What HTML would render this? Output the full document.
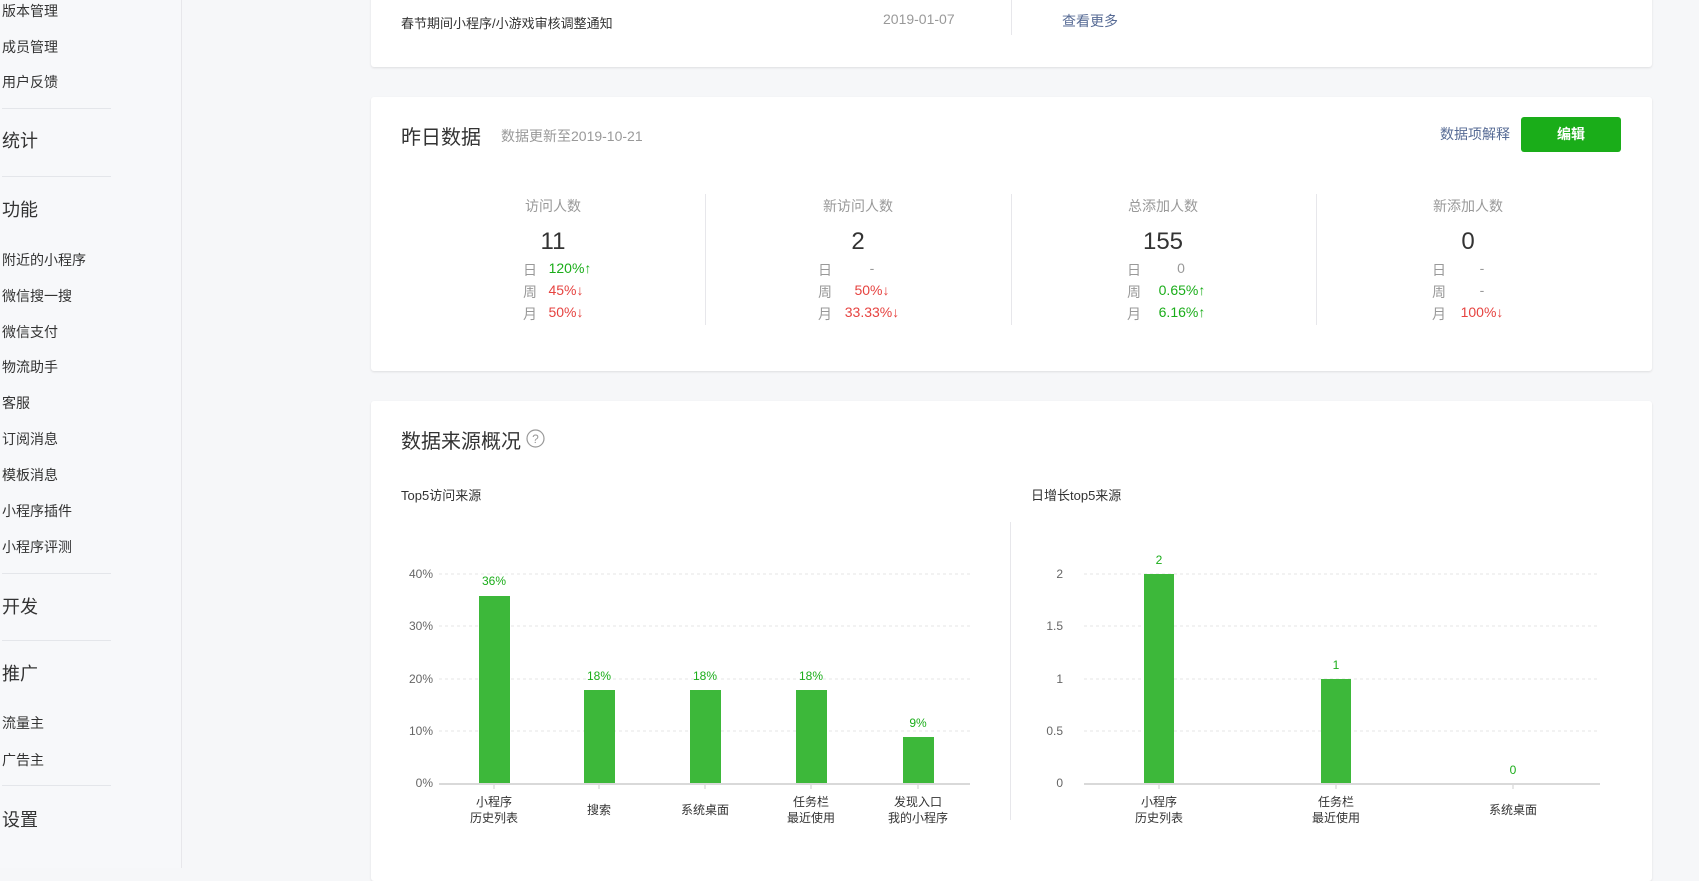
<!DOCTYPE html>
<html><head><meta charset="utf-8"><style>
*{margin:0;padding:0;box-sizing:border-box}
body{width:1699px;height:868px;overflow:hidden;background:#f6f7f9;font-family:"Liberation Sans","Noto Sans CJK SC",sans-serif;color:#333;position:relative}
.a{position:absolute;white-space:nowrap}
.side{position:absolute;left:0;top:0;width:182px;height:868px;background:#f7f8fa;border-right:1px solid #e7e7eb}
.si{position:absolute;left:2px;font-size:14px;color:#333;line-height:18px}
.sh{position:absolute;left:2px;font-size:18px;color:#333;line-height:22px}
.sl{position:absolute;left:2px;width:109px;height:1px;background:#e4e6ea}
.card{position:absolute;left:371px;width:1281px;background:#fff;border-radius:3px;box-shadow:0 1px 2px rgba(0,0,0,.1)}
.lab{font-size:14px;color:#999;transform:translateX(-50%)}
.num{font-size:24px;color:#333;font-weight:300;transform:translateX(-50%)}
.k{font-size:14px;color:#999}
.v{font-size:14px;transform:translateX(-50%)}
.g{color:#1aad19}.r{color:#e64340}.n{color:#999}
</style></head><body>
<div class="side">
<div class="si" style="top:2px">版本管理</div>
<div class="si" style="top:38px">成员管理</div>
<div class="si" style="top:73px">用户反馈</div>
<div class="sl" style="top:108px"></div>
<div class="sh" style="top:130px">统计</div>
<div class="sl" style="top:176px"></div>
<div class="sh" style="top:199px">功能</div>
<div class="si" style="top:251px">附近的小程序</div>
<div class="si" style="top:287px">微信搜一搜</div>
<div class="si" style="top:323px">微信支付</div>
<div class="si" style="top:358px">物流助手</div>
<div class="si" style="top:394px">客服</div>
<div class="si" style="top:430px">订阅消息</div>
<div class="si" style="top:466px">模板消息</div>
<div class="si" style="top:502px">小程序插件</div>
<div class="si" style="top:538px">小程序评测</div>
<div class="sl" style="top:573px"></div>
<div class="sh" style="top:596px">开发</div>
<div class="sl" style="top:640px"></div>
<div class="sh" style="top:663px">推广</div>
<div class="si" style="top:714px">流量主</div>
<div class="si" style="top:751px">广告主</div>
<div class="sl" style="top:785px"></div>
<div class="sh" style="top:809px">设置</div>
</div>

<div class="card" style="top:-10px;height:77px"></div>
<div class="a" style="left:401px;top:13px;font-size:13px">春节期间小程序/小游戏审核调整通知</div>
<div class="a" style="left:883px;top:11px;font-size:14px;color:#999">2019-01-07</div>
<div class="a" style="left:1011px;top:0;width:1px;height:35px;background:#e7e7eb"></div>
<div class="a" style="left:1062px;top:11px;font-size:14px;color:#576b95">查看更多</div>

<div class="card" style="top:97px;height:274px"></div>
<div class="a" style="left:401px;top:121px;font-size:20px;color:#333">昨日数据</div>
<div class="a" style="left:501px;top:126px;font-size:14px;color:#999">数据更新至2019-10-21</div>
<div class="a" style="left:1440px;top:124px;font-size:14px;color:#576b95">数据项解释</div>
<div class="a" style="left:1521px;top:117px;width:100px;height:35px;background:#1aad19;border-radius:3px;color:#fff;font-size:14px;font-weight:bold;text-align:center;line-height:35px">编辑</div>
<div class="a" style="left:705px;top:194px;width:1px;height:131px;background:#e7e7eb"></div>
<div class="a" style="left:1011px;top:194px;width:1px;height:131px;background:#e7e7eb"></div>
<div class="a" style="left:1316px;top:194px;width:1px;height:131px;background:#e7e7eb"></div>

<div class="a lab" style="left:553px;top:196px">访问人数</div>
<div class="a num" style="left:553px;top:228px">11</div>
<div class="a k" style="left:523px;top:260px">日</div><div class="a v g" style="left:570px;top:260px">120%↑</div>
<div class="a k" style="left:523px;top:282px">周</div><div class="a v r" style="left:566px;top:282px">45%↓</div>
<div class="a k" style="left:523px;top:304px">月</div><div class="a v r" style="left:566px;top:304px">50%↓</div>

<div class="a lab" style="left:858px;top:196px">新访问人数</div>
<div class="a num" style="left:858px;top:228px">2</div>
<div class="a k" style="left:818px;top:260px">日</div><div class="a v n" style="left:872px;top:260px">-</div>
<div class="a k" style="left:818px;top:282px">周</div><div class="a v r" style="left:872px;top:282px">50%↓</div>
<div class="a k" style="left:818px;top:304px">月</div><div class="a v r" style="left:872px;top:304px">33.33%↓</div>

<div class="a lab" style="left:1163px;top:196px">总添加人数</div>
<div class="a num" style="left:1163px;top:228px">155</div>
<div class="a k" style="left:1127px;top:260px">日</div><div class="a v n" style="left:1181px;top:260px">0</div>
<div class="a k" style="left:1127px;top:282px">周</div><div class="a v g" style="left:1182px;top:282px">0.65%↑</div>
<div class="a k" style="left:1127px;top:304px">月</div><div class="a v g" style="left:1182px;top:304px">6.16%↑</div>

<div class="a lab" style="left:1468px;top:196px">新添加人数</div>
<div class="a num" style="left:1468px;top:228px">0</div>
<div class="a k" style="left:1432px;top:260px">日</div><div class="a v n" style="left:1482px;top:260px">-</div>
<div class="a k" style="left:1432px;top:282px">周</div><div class="a v n" style="left:1482px;top:282px">-</div>
<div class="a k" style="left:1432px;top:304px">月</div><div class="a v r" style="left:1482px;top:304px">100%↓</div>

<div class="card" style="top:401px;height:480px"></div>
<div class="a" style="left:401px;top:425px;font-size:20px;color:#333">数据来源概况</div>
<svg class="a" style="left:525px;top:428px" width="21" height="21"><circle cx="10.5" cy="10.5" r="8.5" fill="none" stroke="#999" stroke-width="1.2"/><text x="10.5" y="15" text-anchor="middle" font-size="12" fill="#999" font-family="Liberation Sans">?</text></svg>
<div class="a" style="left:401px;top:485px;font-size:13px;color:#333">Top5访问来源</div>
<div class="a" style="left:1031px;top:485px;font-size:13px;color:#333">日增长top5来源</div>
<div class="a" style="left:1010px;top:522px;width:1px;height:298px;background:#e7e7eb"></div>

<svg class="a" style="left:0;top:0" width="1699" height="868" font-family="Liberation Sans" font-size="12">
<g stroke="#e6e6e6" stroke-dasharray="3,3">
<line x1="439" y1="574" x2="970" y2="574"/><line x1="439" y1="626" x2="970" y2="626"/><line x1="439" y1="679" x2="970" y2="679"/><line x1="439" y1="731" x2="970" y2="731"/>
<line x1="1084" y1="574" x2="1600" y2="574"/><line x1="1084" y1="626" x2="1600" y2="626"/><line x1="1084" y1="679" x2="1600" y2="679"/><line x1="1084" y1="731" x2="1600" y2="731"/>
</g>
<g fill="#666" text-anchor="end">
<text x="433" y="578">40%</text><text x="433" y="630">30%</text><text x="433" y="683">20%</text><text x="433" y="735">10%</text><text x="433" y="787">0%</text>
<text x="1063" y="578">2</text><text x="1063" y="630">1.5</text><text x="1063" y="683">1</text><text x="1063" y="735">0.5</text><text x="1063" y="787">0</text>
</g>
<g fill="#3db83a">
<rect x="479" y="596" width="31" height="187"/><rect x="584" y="690" width="31" height="93"/><rect x="690" y="690" width="31" height="93"/><rect x="796" y="690" width="31" height="93"/><rect x="903" y="737" width="31" height="46"/>
<rect x="1144" y="574" width="30" height="209"/><rect x="1321" y="679" width="30" height="104"/>
</g>
<g stroke="#d9d9d9" stroke-width="2"><line x1="439" y1="784" x2="970" y2="784"/><line x1="1084" y1="784" x2="1600" y2="784"/></g>
<g stroke="#ccc"><line x1="494" y1="785" x2="494" y2="789"/><line x1="599" y1="785" x2="599" y2="789"/><line x1="705" y1="785" x2="705" y2="789"/><line x1="811" y1="785" x2="811" y2="789"/><line x1="918" y1="785" x2="918" y2="789"/><line x1="1159" y1="785" x2="1159" y2="789"/><line x1="1336" y1="785" x2="1336" y2="789"/><line x1="1513" y1="785" x2="1513" y2="789"/></g>
<g fill="#1aad19" text-anchor="middle">
<text x="494" y="585">36%</text><text x="599" y="680">18%</text><text x="705" y="680">18%</text><text x="811" y="680">18%</text><text x="918" y="727">9%</text>
<text x="1159" y="564">2</text><text x="1336" y="669">1</text><text x="1513" y="774">0</text>
</g>
<g fill="#333" text-anchor="middle" font-family="Liberation Sans,Noto Sans CJK SC,sans-serif">
<text x="494" y="806">小程序</text><text x="494" y="822">历史列表</text>
<text x="599" y="814">搜索</text>
<text x="705" y="814">系统桌面</text>
<text x="811" y="806">任务栏</text><text x="811" y="822">最近使用</text>
<text x="918" y="806">发现入口</text><text x="918" y="822">我的小程序</text>
<text x="1159" y="806">小程序</text><text x="1159" y="822">历史列表</text>
<text x="1336" y="806">任务栏</text><text x="1336" y="822">最近使用</text>
<text x="1513" y="814">系统桌面</text>
</g>
</svg>
</body></html>
